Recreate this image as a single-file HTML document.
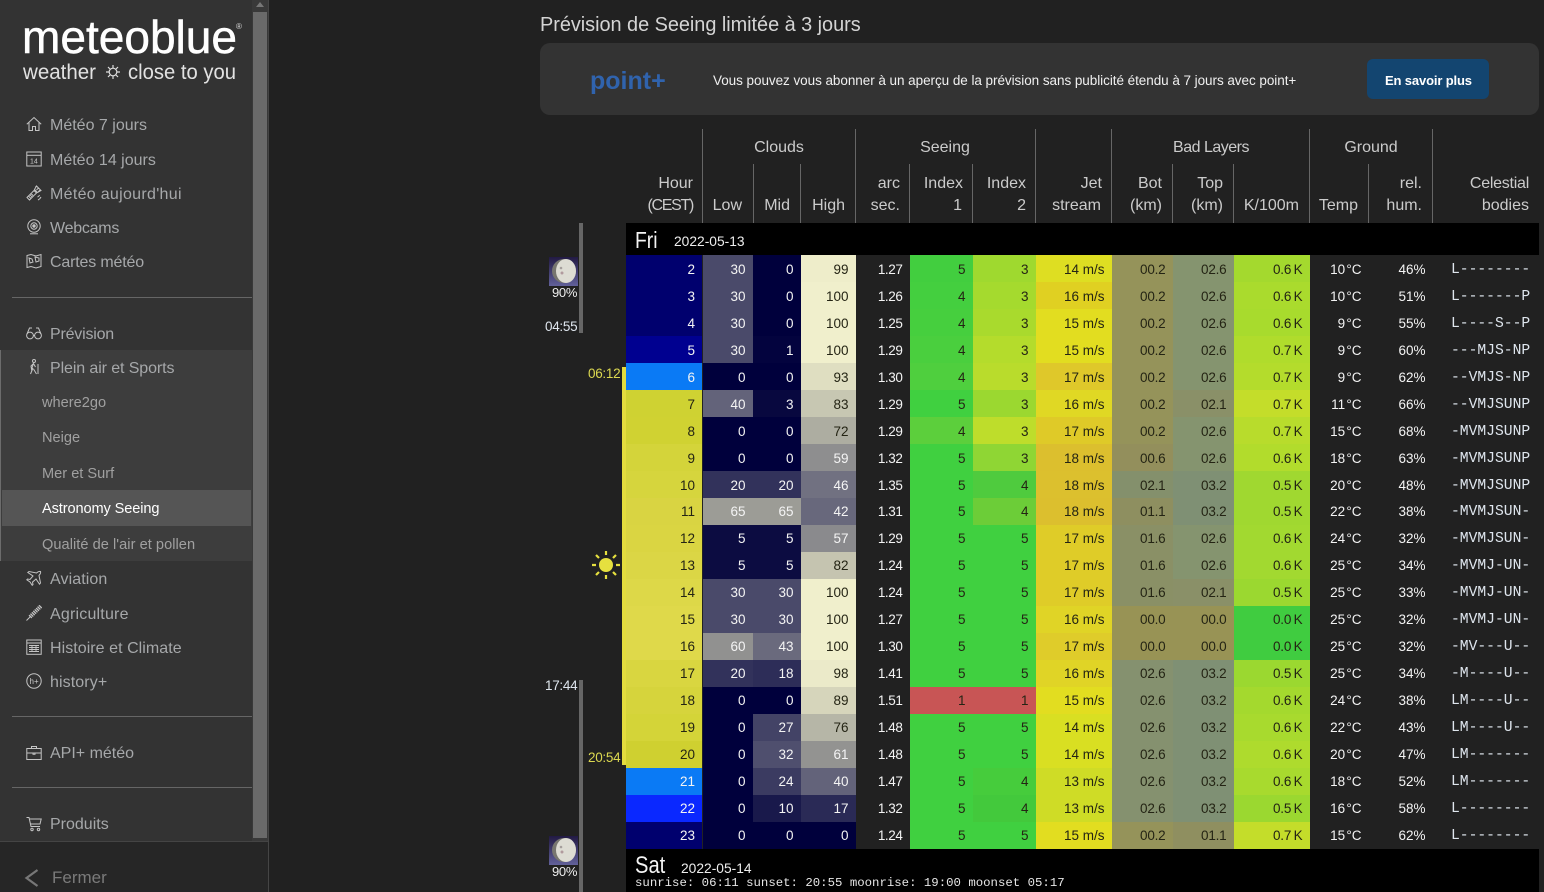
<!DOCTYPE html>
<html lang="fr"><head><meta charset="utf-8"><title>Astronomy Seeing</title>
<style>
*{box-sizing:border-box}
html,body{margin:0;padding:0;width:1544px;height:892px;overflow:hidden;background:#212121;font-family:"Liberation Sans",sans-serif}
.a{position:absolute;white-space:nowrap}
#side{position:absolute;left:0;top:0;width:269px;height:892px;background:#333;border-right:1px solid #454545}
.m{position:absolute;left:50px;font-size:16px;line-height:20px;color:#a6a8aa;white-space:nowrap}
.s{position:absolute;left:42px;font-size:14.6px;line-height:20px;color:#a0a0a0;white-space:nowrap}
.i{position:absolute;left:26px;width:16px;height:16px;fill:none;stroke:#c4c4c4;stroke-width:1}
.sep{position:absolute;left:12px;width:240px;height:1px;background:#666}
.h{position:absolute;font-size:16px;line-height:20px;color:#cbcbcb;white-space:nowrap}
.g{transform:translateX(-50%)}
.v{position:absolute;width:1px;background:#666;bottom:669px}
#t{position:absolute;left:626px;top:255px;width:913px;border-collapse:collapse;table-layout:fixed;font-size:13.5px;color:#f4f4f4}
#t td{height:27px;padding:0 7.5px 0 0;text-align:right;line-height:14px;overflow:hidden;white-space:nowrap}
#t tr:nth-child(-n+9) td{padding-top:2px}
#t td.d{color:#242414}
#t td:last-child{text-align:left;padding-left:18px;padding-right:0;font-family:"Liberation Mono",monospace;font-size:14.66px;color:#dfe6ee}
#t td:first-child{box-shadow:inset -1px 0 #222;padding-right:8px}
#t td:nth-child(5){letter-spacing:-.4px}
#t td:nth-child(9),#t td:nth-child(10){letter-spacing:-.2px}
#t td:nth-child(11){letter-spacing:-.2px;word-spacing:-1px}
#t td:nth-child(12){word-spacing:-2.5px}
</style></head><body>

<div id="side">
<div class="a" style="left:0;top:350px;width:252px;height:211px;background:#3d3d3d;border-left:1px solid #6c6c6c"></div>
<div class="a" style="left:2px;top:490px;width:249px;height:36px;background:#555"></div>
<div class="a" style="left:252px;top:0;width:16px;height:842px;background:#393939"></div>
<div class="a" style="left:253px;top:12px;width:14px;height:826px;background:#6a6a6a"></div>
<div class="a" style="left:256px;top:2px;width:0;height:0;border-left:4px solid transparent;border-right:4px solid transparent;border-bottom:5px solid #777"></div>

<svg class="a" style="left:0;top:0" width="252" height="100">
<text x="22" y="53" font-family="Liberation Sans,sans-serif" font-size="46" fill="#fff" stroke="#fff" stroke-width=".5" textLength="215" lengthAdjust="spacingAndGlyphs">meteoblue</text>
<text x="236" y="29" font-family="Liberation Sans,sans-serif" font-size="8" fill="#ddd">®</text>
<text x="23" y="79" font-family="Liberation Sans,sans-serif" font-size="21" fill="#e2e2e2" textLength="73" lengthAdjust="spacingAndGlyphs">weather</text>
<text x="128" y="79" font-family="Liberation Sans,sans-serif" font-size="21" fill="#e2e2e2" textLength="108" lengthAdjust="spacingAndGlyphs">close to you</text>
<g fill="none" stroke="#ddd" stroke-width="1.2"><circle cx="113" cy="72" r="3.8"/><path d="M113 65v3M113 76v3M106 72h3M117 72h3M108 67l2 2M116 75l2 2M118 67l-2 2M110 75l-2 2"/></g>
</svg>

<svg class="i" style="top:116px" viewBox="0 0 16 16"><path d="M.8 8.2 8 1.5l7.2 6.7M3 6.500v8h3.500v-4h3v4H13v-8"/></svg>
<div class="m" style="top:116px">Météo 7 jours</div>
<svg class="i" style="top:151px" viewBox="0 0 16 16"><rect x=".8" y="1" width="14.400" height="14"/><path d="M.8 4.300h14.400"/><text x="4" y="12.500" font-size="7" fill="#ccc" stroke="none" font-family="Liberation Sans">14</text></svg>
<div class="m" style="top:151px">Météo 14 jours</div>
<svg class="i" style="top:185px" viewBox="0 0 16 16"><path d="M1 12.500 5 8.500l2.500 2.500-4 4zM2.500 11l2.500 2.500M4 9.800l2.300 2.400M5.500 8 8 5.500l2.500 2.500L8 10.500M8.500 4.500l2-3.500 4.500 4.500-3.500 2zM10.500 1l-1 1M12.500 3l-2 2M14 5l-2 2M11.500 12a3 3 0 0 0 2-2M12 15a6 6 0 0 0 3-3" /></svg>
<div class="m" style="top:185px;letter-spacing:.3px">Météo aujourd'hui</div>
<svg class="i" style="top:219px" viewBox="0 0 16 16"><circle cx="8" cy="7" r="6.200"/><circle cx="8" cy="7" r="3.200"/><circle cx="8" cy="7" r="1.200" fill="#c4c4c4"/><path d="M4 14.800h8"/></svg>
<div class="m" style="top:219px;letter-spacing:-.25px">Webcams</div>
<svg class="i" style="top:253px" viewBox="0 0 16 16"><path d="M1 2.500 5 1.500l5 1.500 5-1.500v12l-5 1.500-5-1.500-4 1zM3 5l3 1 1 3-3 1zM9 4l4 1v3l-3 1z"/></svg>
<div class="m" style="top:253px;letter-spacing:-.17px">Cartes météo</div>
<div class="sep" style="top:297px"></div>

<svg class="i" style="top:325px" viewBox="0 0 16 16"><circle cx="4" cy="10.500" r="3.400"/><circle cx="12" cy="10.500" r="3.400"/><path d="M7.400 10.500h1.200M1 9 3.500 3H6M15 9l-2.500-6H10"/></svg>
<div class="m" style="top:325px;letter-spacing:-.2px">Prévision</div>
<svg class="i" style="top:359px" viewBox="0 0 16 16"><circle cx="8" cy="2" r="1.500"/><path d="M7.500 4.500 5 7l.5 3 2-5.500 2 3.500M7 9l-2.500 6M7.500 10l3 5M12 5v10"/></svg>
<div class="m" style="top:359px;letter-spacing:-.1px">Plein air et Sports</div>
<div class="s" style="top:393px">where2go</div>
<div class="s" style="top:428px">Neige</div>
<div class="s" style="top:464px">Mer et Surf</div>
<div class="s" style="top:499px;color:#fff;letter-spacing:-.12px">Astronomy Seeing</div>
<div class="s" style="top:535px;letter-spacing:.04px">Qualité de l'air et pollen</div>
<svg class="i" style="top:570px" viewBox="0 0 16 16"><path d="M14.500 1.500c-1.500-.5-3 .5-4 1.500L3 1.500 1.800 2.500 7 6l-3 3.500-2.500-.5-.7.800L4 12l2.200 3.300.8-.7-.5-2.500L10 9l3.500 5.200 1-1.200L13 5.500c1-1 2-2.500 1.500-4z"/></svg>
<div class="m" style="top:570px;letter-spacing:.1px">Aviation</div>
<svg class="i" style="top:605px" viewBox="0 0 16 16"><path d="M.5 15.500 5 11"/><path d="M4 12 15 1" stroke-width="4" stroke-dasharray="1.300 .7"/></svg>
<div class="m" style="top:605px;letter-spacing:.2px">Agriculture</div>
<svg class="i" style="top:639px" viewBox="0 0 16 16"><rect x=".8" y="1" width="14.400" height="14.300"/><path d="M.8 4h14.400"/><path d="M3 6.500h10M3 8.500h10M3 10.500h10M3 12.500h10M6 6v7M10 6v7" stroke-width=".9"/></svg>
<div class="m" style="top:639px;letter-spacing:.05px">Histoire et Climate</div>
<svg class="i" style="top:673px" viewBox="0 0 16 16"><circle cx="8" cy="8" r="7.200"/><text x="3.500" y="11" font-size="8" fill="#ccc" stroke="none" font-family="Liberation Sans">h+</text></svg>
<div class="m" style="top:673px;letter-spacing:.1px">history+</div>
<div class="sep" style="top:716px"></div>
<svg class="i" style="top:745px" viewBox="0 0 16 16"><rect x=".8" y="3.500" width="14.400" height="11"/><path d="M.8 8h14.400M5.500 3.500V1.500h5v2M7 8v1.200h2V8"/></svg>
<div class="m" style="top:744px">API+ météo</div>
<div class="sep" style="top:787px"></div>
<svg class="i" style="top:816px" viewBox="0 0 16 16"><path d="M.5 1.500h2.500l2 9h9M3.200 3h12l-1.200 5H4.500"/><circle cx="6" cy="13.500" r="1.200"/><circle cx="12.500" cy="13.500" r="1.200"/></svg>
<div class="m" style="top:815px">Produits</div>

<div class="a" style="left:0;top:841px;width:268px;height:51px;background:#262626;border-top:1px solid #444"></div>
<svg class="a" style="left:24px;top:868px" width="16" height="20" fill="none" stroke="#777" stroke-width="2.200"><path d="M13.500 2 2.500 10l11 8"/></svg>
<div class="a" style="left:52px;top:868px;font-size:17px;line-height:20px;color:#7a7a7a">Fermer</div>
</div>

<div class="a" style="left:540px;top:13px;font-size:19.900px;line-height:25px;color:#d4d4d4;letter-spacing:-.03px" id="title">Prévision de Seeing limitée à 3 jours</div>
<div class="a" style="left:540px;top:43px;width:999px;height:72px;background:#333;border-radius:10px"></div>
<div class="a" style="left:590px;top:66px;font-size:25px;line-height:30px;font-weight:bold;color:#3063ad">point+</div>
<div class="a" style="left:713px;top:72px;font-size:13.500px;line-height:17px;color:#f0f0f0;letter-spacing:-.05px">Vous pouvez vous abonner à un aperçu de la prévision sans publicité étendu à 7 jours avec point+</div>
<div class="a" style="left:1367px;top:59px;width:122px;height:40px;background:#134570;border-radius:6px"></div>
<div class="a" style="left:1385px;top:72px;font-size:13px;line-height:17px;font-weight:bold;color:#fff;letter-spacing:-.14px">En savoir plus</div>

<div class="v" style="left:702px;top:129px"></div>
<div class="v" style="left:753px;top:164px"></div>
<div class="v" style="left:800px;top:164px"></div>
<div class="v" style="left:855px;top:129px"></div>
<div class="v" style="left:909px;top:164px"></div>
<div class="v" style="left:972px;top:164px"></div>
<div class="v" style="left:1035px;top:129px"></div>
<div class="v" style="left:1111px;top:129px"></div>
<div class="v" style="left:1172px;top:164px"></div>
<div class="v" style="left:1233px;top:164px"></div>
<div class="v" style="left:1309px;top:129px"></div>
<div class="v" style="left:1368px;top:164px"></div>
<div class="v" style="left:1432px;top:129px"></div>

<div class="h g" style="left:779px;top:138px">Clouds</div>
<div class="h g" style="left:945px;top:138px">Seeing</div>
<div class="h g" style="left:1211px;top:138px;letter-spacing:-.5px">Bad Layers</div>
<div class="h g" style="left:1371px;top:138px">Ground</div>

<div class="h" style="right:851px;top:174px">Hour</div><div class="h" style="right:851px;top:196px;letter-spacing:-1.300px">(CEST)</div>
<div class="h" style="right:802px;top:196px">Low</div>
<div class="h" style="right:754px;top:196px">Mid</div>
<div class="h" style="right:699px;top:196px">High</div>
<div class="h" style="right:644px;top:174px">arc</div><div class="h" style="right:644px;top:196px">sec.</div>
<div class="h" style="right:581px;top:174px">Index</div><div class="h" style="right:582px;top:196px">1</div>
<div class="h" style="right:518px;top:174px">Index</div><div class="h" style="right:518px;top:196px">2</div>
<div class="h" style="right:442px;top:174px">Jet</div><div class="h" style="right:443px;top:196px">stream</div>
<div class="h" style="right:382px;top:174px">Bot</div><div class="h" style="right:382px;top:196px">(km)</div>
<div class="h" style="right:321px;top:174px">Top</div><div class="h" style="right:321px;top:196px">(km)</div>
<div class="h" style="right:245px;top:196px">K/100m</div>
<div class="h" style="right:186px;top:196px">Temp</div>
<div class="h" style="right:122px;top:174px">rel.</div><div class="h" style="right:122px;top:196px">hum.</div>
<div class="h" style="right:15px;top:174px;letter-spacing:-.25px">Celestial</div><div class="h" style="right:15px;top:196px">bodies</div>

<div class="a" style="left:626px;top:223px;width:913px;height:32px;background:#000"></div>
<div class="a" style="left:635px;top:227px;font-size:23px;line-height:26px;color:#f4f4f4;transform:scaleX(.84);transform-origin:left">Fri</div>
<div class="a" style="left:674px;top:233px;font-size:13.800px;line-height:18px;color:#eee">2022-05-13</div>

<div class="a" style="left:579px;top:223px;width:4px;height:110px;background:#666"></div>
<div class="a" style="left:579px;top:680px;width:4px;height:212px;background:#666"></div>
<div class="a" style="left:622px;top:367px;width:4px;height:398px;background:#e3dc3e"></div>
<div class="a" style="left:545px;top:319px;font-size:13.500px;line-height:16px;color:#dfe6ee;letter-spacing:-.3px">04:55</div>
<div class="a" style="left:545px;top:678px;font-size:13.500px;line-height:16px;color:#dfe6ee;letter-spacing:-.3px">17:44</div>
<div class="a" style="left:588px;top:366px;font-size:13.500px;line-height:16px;color:#dcd850;letter-spacing:-.3px">06:12</div>
<div class="a" style="left:588px;top:750px;font-size:13.500px;line-height:16px;color:#dcd850;letter-spacing:-.3px">20:54</div>

<svg class="a" style="left:592px;top:551px" width="28" height="28"><circle cx="14" cy="14" r="7" fill="#e6e03f"/><g stroke="#e6e03f" stroke-width="2.200"><path d="M14 0v4M14 24v4M0 14h4M24 14h4M4 4l3 3M21 21l3 3M24 4l-3 3M7 21l-3 3"/></g></svg>

<svg class="a" style="left:549px;top:257px" width="29" height="29"><defs><linearGradient id="mg" x1="0" y1="0" x2="0" y2="1"><stop offset="0" stop-color="#221a44"/><stop offset="1" stop-color="#62619a"/></linearGradient></defs><rect width="29" height="29" fill="url(#mg)"/><circle cx="15" cy="14" r="12" fill="#77766f"/><ellipse cx="17" cy="14" rx="10" ry="12" fill="#dddcd3"/><circle cx="12" cy="11" r="1.300" fill="#a59f9c"/><circle cx="13" cy="16" r="1.500" fill="#b19a9d"/></svg>
<div class="a" style="left:552px;top:285px;font-size:13px;line-height:16px;color:#eee;letter-spacing:-.3px">90%</div>
<svg class="a" style="left:549px;top:836px" width="29" height="29"><rect width="29" height="29" fill="url(#mg)"/><circle cx="15" cy="14" r="12" fill="#77766f"/><ellipse cx="17" cy="14" rx="10" ry="12" fill="#dddcd3"/><circle cx="12" cy="11" r="1.300" fill="#a59f9c"/><circle cx="13" cy="16" r="1.500" fill="#b19a9d"/></svg>
<div class="a" style="left:552px;top:864px;font-size:13px;line-height:16px;color:#eee;letter-spacing:-.3px">90%</div>

<table id="t"><colgroup><col style="width:77px"><col style="width:50px"><col style="width:48px"><col style="width:55px"><col style="width:54px"><col style="width:63px"><col style="width:63px"><col style="width:76px"><col style="width:61px"><col style="width:61px"><col style="width:76px"><col style="width:59px"><col style="width:64px"><col style="width:106px"></colgroup>
<tr><td bgcolor="#00006e">2</td><td bgcolor="#4a4a6a">30</td><td bgcolor="#00003c">0</td><td class="d" bgcolor="#eeedca">99</td><td>1.27</td><td class="d" bgcolor="#42ce3f">5</td><td class="d" bgcolor="#9fd92f">3</td><td class="d" bgcolor="#dede22">14 m/s</td><td class="d" bgcolor="#95935a">00.2</td><td class="d" bgcolor="#85946f">02.6</td><td class="d" bgcolor="#a4d92e">0.6 K</td><td>10 °C</td><td>46%</td><td>L--------</td></tr>
<tr><td bgcolor="#00006e">3</td><td bgcolor="#4a4a6a">30</td><td bgcolor="#00003c">0</td><td class="d" bgcolor="#f0efcc">100</td><td>1.26</td><td class="d" bgcolor="#44cf3f">4</td><td class="d" bgcolor="#a5da2e">3</td><td class="d" bgcolor="#e0d022">16 m/s</td><td class="d" bgcolor="#95935a">00.2</td><td class="d" bgcolor="#85946f">02.6</td><td class="d" bgcolor="#aadb2d">0.6 K</td><td>10 °C</td><td>51%</td><td>L-------P</td></tr>
<tr><td bgcolor="#00006e">4</td><td bgcolor="#4a4a6a">30</td><td bgcolor="#00003c">0</td><td class="d" bgcolor="#f0efcc">100</td><td>1.25</td><td class="d" bgcolor="#46cf3e">4</td><td class="d" bgcolor="#a9da2d">3</td><td class="d" bgcolor="#e2dd20">15 m/s</td><td class="d" bgcolor="#95935a">00.2</td><td class="d" bgcolor="#85946f">02.6</td><td class="d" bgcolor="#a8db2d">0.6 K</td><td>9 °C</td><td>55%</td><td>L----S--P</td></tr>
<tr><td bgcolor="#000090">5</td><td bgcolor="#4a4a6a">30</td><td bgcolor="#03033e">1</td><td class="d" bgcolor="#f0efcc">100</td><td>1.29</td><td class="d" bgcolor="#4acf3e">4</td><td class="d" bgcolor="#b4dc2c">3</td><td class="d" bgcolor="#e2dd20">15 m/s</td><td class="d" bgcolor="#95935a">00.2</td><td class="d" bgcolor="#85946f">02.6</td><td class="d" bgcolor="#b0dc2c">0.7 K</td><td>9 °C</td><td>60%</td><td>---MJS-NP</td></tr>
<tr><td bgcolor="#0a7af5">6</td><td bgcolor="#00003c">0</td><td bgcolor="#00003c">0</td><td class="d" bgcolor="#dfdec1">93</td><td>1.30</td><td class="d" bgcolor="#4fcf3e">4</td><td class="d" bgcolor="#b9dc2c">3</td><td class="d" bgcolor="#dfc82a">17 m/s</td><td class="d" bgcolor="#95935a">00.2</td><td class="d" bgcolor="#85946f">02.6</td><td class="d" bgcolor="#b4dc2c">0.7 K</td><td>9 °C</td><td>62%</td><td>--VMJS-NP</td></tr>
<tr><td class="d" bgcolor="#cfd232">7</td><td bgcolor="#63637a">40</td><td bgcolor="#08083f">3</td><td class="d" bgcolor="#c7c7b2">83</td><td>1.29</td><td class="d" bgcolor="#40d040">5</td><td class="d" bgcolor="#9bd830">3</td><td class="d" bgcolor="#e0d824">16 m/s</td><td class="d" bgcolor="#95935a">00.2</td><td class="d" bgcolor="#8a9068">02.1</td><td class="d" bgcolor="#c4dd2a">0.7 K</td><td>11 °C</td><td>66%</td><td>--VMJSUNP</td></tr>
<tr><td class="d" bgcolor="#d0d232">8</td><td bgcolor="#00003c">0</td><td bgcolor="#00003c">0</td><td class="d" bgcolor="#adada1">72</td><td>1.29</td><td class="d" bgcolor="#5ccf3c">4</td><td class="d" bgcolor="#bedd2b">3</td><td class="d" bgcolor="#dfca28">17 m/s</td><td class="d" bgcolor="#95935a">00.2</td><td class="d" bgcolor="#85946f">02.6</td><td class="d" bgcolor="#b8dc2c">0.7 K</td><td>15 °C</td><td>68%</td><td>-MVMJSUNP</td></tr>
<tr><td class="d" bgcolor="#d4d43a">9</td><td bgcolor="#00003c">0</td><td bgcolor="#00003c">0</td><td bgcolor="#8e8e8f">59</td><td>1.32</td><td class="d" bgcolor="#40d040">5</td><td class="d" bgcolor="#8fd634">3</td><td class="d" bgcolor="#dcbf2e">18 m/s</td><td class="d" bgcolor="#938f5c">00.6</td><td class="d" bgcolor="#85946f">02.6</td><td class="d" bgcolor="#b2dc2c">0.6 K</td><td>18 °C</td><td>63%</td><td>-MVMJSUNP</td></tr>
<tr><td class="d" bgcolor="#d6d53d">10</td><td bgcolor="#32325b">20</td><td bgcolor="#32325b">20</td><td bgcolor="#717181">46</td><td>1.35</td><td class="d" bgcolor="#40d040">5</td><td class="d" bgcolor="#4fcb3e">4</td><td class="d" bgcolor="#dcc02e">18 m/s</td><td class="d" bgcolor="#84906c">02.1</td><td class="d" bgcolor="#7f9074">03.2</td><td class="d" bgcolor="#a0d830">0.5 K</td><td>20 °C</td><td>48%</td><td>-MVMJSUNP</td></tr>
<tr><td class="d" bgcolor="#d9d442">11</td><td bgcolor="#9c9c96">65</td><td bgcolor="#9c9c96">65</td><td bgcolor="#68687c">42</td><td>1.31</td><td class="d" bgcolor="#40d040">5</td><td class="d" bgcolor="#6ccd38">4</td><td class="d" bgcolor="#dcbf2e">18 m/s</td><td class="d" bgcolor="#8e8f60">01.1</td><td class="d" bgcolor="#7f9074">03.2</td><td class="d" bgcolor="#a0d830">0.5 K</td><td>22 °C</td><td>38%</td><td>-MVMJSUN-</td></tr>
<tr><td class="d" bgcolor="#dad542">12</td><td bgcolor="#0c0c41">5</td><td bgcolor="#0c0c41">5</td><td bgcolor="#8a8a8d">57</td><td>1.29</td><td class="d" bgcolor="#40d040">5</td><td class="d" bgcolor="#40d040">5</td><td class="d" bgcolor="#dfcc28">17 m/s</td><td class="d" bgcolor="#8a9066">01.6</td><td class="d" bgcolor="#85946f">02.6</td><td class="d" bgcolor="#a2d930">0.6 K</td><td>24 °C</td><td>32%</td><td>-MVMJSUN-</td></tr>
<tr><td class="d" bgcolor="#dbd645">13</td><td bgcolor="#0c0c41">5</td><td bgcolor="#0c0c41">5</td><td class="d" bgcolor="#c5c4b0">82</td><td>1.24</td><td class="d" bgcolor="#40d040">5</td><td class="d" bgcolor="#40d040">5</td><td class="d" bgcolor="#dfcc28">17 m/s</td><td class="d" bgcolor="#8a9066">01.6</td><td class="d" bgcolor="#85946f">02.6</td><td class="d" bgcolor="#a2d930">0.6 K</td><td>25 °C</td><td>34%</td><td>-MVMJ-UN-</td></tr>
<tr><td class="d" bgcolor="#ddd848">14</td><td bgcolor="#4a4a6a">30</td><td bgcolor="#4a4a6a">30</td><td class="d" bgcolor="#f0efcc">100</td><td>1.24</td><td class="d" bgcolor="#40d040">5</td><td class="d" bgcolor="#40d040">5</td><td class="d" bgcolor="#dfcc28">17 m/s</td><td class="d" bgcolor="#8a9066">01.6</td><td class="d" bgcolor="#8a9068">02.1</td><td class="d" bgcolor="#9bd830">0.5 K</td><td>25 °C</td><td>33%</td><td>-MVMJ-UN-</td></tr>
<tr><td class="d" bgcolor="#dfd94a">15</td><td bgcolor="#4a4a6a">30</td><td bgcolor="#4a4a6a">30</td><td class="d" bgcolor="#f0efcc">100</td><td>1.27</td><td class="d" bgcolor="#40d040">5</td><td class="d" bgcolor="#40d040">5</td><td class="d" bgcolor="#e0d426">16 m/s</td><td class="d" bgcolor="#989355">00.0</td><td class="d" bgcolor="#989355">00.0</td><td class="d" bgcolor="#40cc40">0.0 K</td><td>25 °C</td><td>32%</td><td>-MVMJ-UN-</td></tr>
<tr><td class="d" bgcolor="#dfd94a">16</td><td bgcolor="#919190">60</td><td bgcolor="#6a6a7d">43</td><td class="d" bgcolor="#f0efcc">100</td><td>1.30</td><td class="d" bgcolor="#40d040">5</td><td class="d" bgcolor="#40d040">5</td><td class="d" bgcolor="#dfcc2a">17 m/s</td><td class="d" bgcolor="#989355">00.0</td><td class="d" bgcolor="#989355">00.0</td><td class="d" bgcolor="#40cc40">0.0 K</td><td>25 °C</td><td>32%</td><td>-MV---U--</td></tr>
<tr><td class="d" bgcolor="#d9d640">17</td><td bgcolor="#32325b">20</td><td bgcolor="#2d2d58">18</td><td class="d" bgcolor="#ebeac9">98</td><td>1.41</td><td class="d" bgcolor="#40d040">5</td><td class="d" bgcolor="#40d040">5</td><td class="d" bgcolor="#e0d426">16 m/s</td><td class="d" bgcolor="#85916f">02.6</td><td class="d" bgcolor="#7f9074">03.2</td><td class="d" bgcolor="#9bd830">0.5 K</td><td>25 °C</td><td>34%</td><td>-M----U--</td></tr>
<tr><td class="d" bgcolor="#d6d43c">18</td><td bgcolor="#00003c">0</td><td bgcolor="#00003c">0</td><td class="d" bgcolor="#d6d5bb">89</td><td>1.51</td><td class="d" bgcolor="#c85555">1</td><td class="d" bgcolor="#c85555">1</td><td class="d" bgcolor="#e2dd20">15 m/s</td><td class="d" bgcolor="#85916f">02.6</td><td class="d" bgcolor="#7f9074">03.2</td><td class="d" bgcolor="#a4d92e">0.6 K</td><td>24 °C</td><td>38%</td><td>LM----U--</td></tr>
<tr><td class="d" bgcolor="#d4d438">19</td><td bgcolor="#00003c">0</td><td bgcolor="#434366">27</td><td class="d" bgcolor="#b6b6a7">76</td><td>1.48</td><td class="d" bgcolor="#40d040">5</td><td class="d" bgcolor="#40d040">5</td><td class="d" bgcolor="#d9df22">14 m/s</td><td class="d" bgcolor="#85916f">02.6</td><td class="d" bgcolor="#7f9074">03.2</td><td class="d" bgcolor="#a8da2e">0.6 K</td><td>22 °C</td><td>43%</td><td>LM----U--</td></tr>
<tr><td class="d" bgcolor="#cfd030">20</td><td bgcolor="#00003c">0</td><td bgcolor="#4f4f6e">32</td><td bgcolor="#939391">61</td><td>1.48</td><td class="d" bgcolor="#40d040">5</td><td class="d" bgcolor="#40d040">5</td><td class="d" bgcolor="#d9df22">14 m/s</td><td class="d" bgcolor="#85916f">02.6</td><td class="d" bgcolor="#7f9074">03.2</td><td class="d" bgcolor="#aedb2d">0.6 K</td><td>20 °C</td><td>47%</td><td>LM-------</td></tr>
<tr><td bgcolor="#0a7af5">21</td><td bgcolor="#00003c">0</td><td bgcolor="#3b3b61">24</td><td bgcolor="#63637a">40</td><td>1.47</td><td class="d" bgcolor="#40d040">5</td><td class="d" bgcolor="#46cc3c">4</td><td class="d" bgcolor="#cfdc26">13 m/s</td><td class="d" bgcolor="#85916f">02.6</td><td class="d" bgcolor="#7f9074">03.2</td><td class="d" bgcolor="#a8da2e">0.6 K</td><td>18 °C</td><td>52%</td><td>LM-------</td></tr>
<tr><td bgcolor="#0a28ff">22</td><td bgcolor="#00003c">0</td><td bgcolor="#19194b">10</td><td bgcolor="#2a2a56">17</td><td>1.32</td><td class="d" bgcolor="#40d040">5</td><td class="d" bgcolor="#43c93c">4</td><td class="d" bgcolor="#cfdc26">13 m/s</td><td class="d" bgcolor="#85916f">02.6</td><td class="d" bgcolor="#7f9074">03.2</td><td class="d" bgcolor="#9bd830">0.5 K</td><td>16 °C</td><td>58%</td><td>L--------</td></tr>
<tr><td bgcolor="#00006e">23</td><td bgcolor="#00003c">0</td><td bgcolor="#00003c">0</td><td bgcolor="#00003c">0</td><td>1.24</td><td class="d" bgcolor="#40d040">5</td><td class="d" bgcolor="#40d040">5</td><td class="d" bgcolor="#e2dd20">15 m/s</td><td class="d" bgcolor="#95935a">00.2</td><td class="d" bgcolor="#8f8f60">01.1</td><td class="d" bgcolor="#c4dd2a">0.7 K</td><td>15 °C</td><td>62%</td><td>L--------</td></tr>
</table>

<div class="a" style="left:626px;top:849px;width:913px;height:43px;background:#000"></div>
<div class="a" style="left:635px;top:852px;font-size:24px;line-height:27px;color:#f4f4f4;transform:scaleX(.84);transform-origin:left">Sat</div>
<div class="a" style="left:681px;top:860px;font-size:13.800px;line-height:18px;color:#eee">2022-05-14</div>
<div class="a" style="left:635px;top:876px;font-family:'Liberation Mono',monospace;font-size:12.350px;line-height:15px;color:#e6e6e6">sunrise: 06:11 sunset: 20:55 moonrise: 19:00 moonset 05:17</div>
</body></html>
